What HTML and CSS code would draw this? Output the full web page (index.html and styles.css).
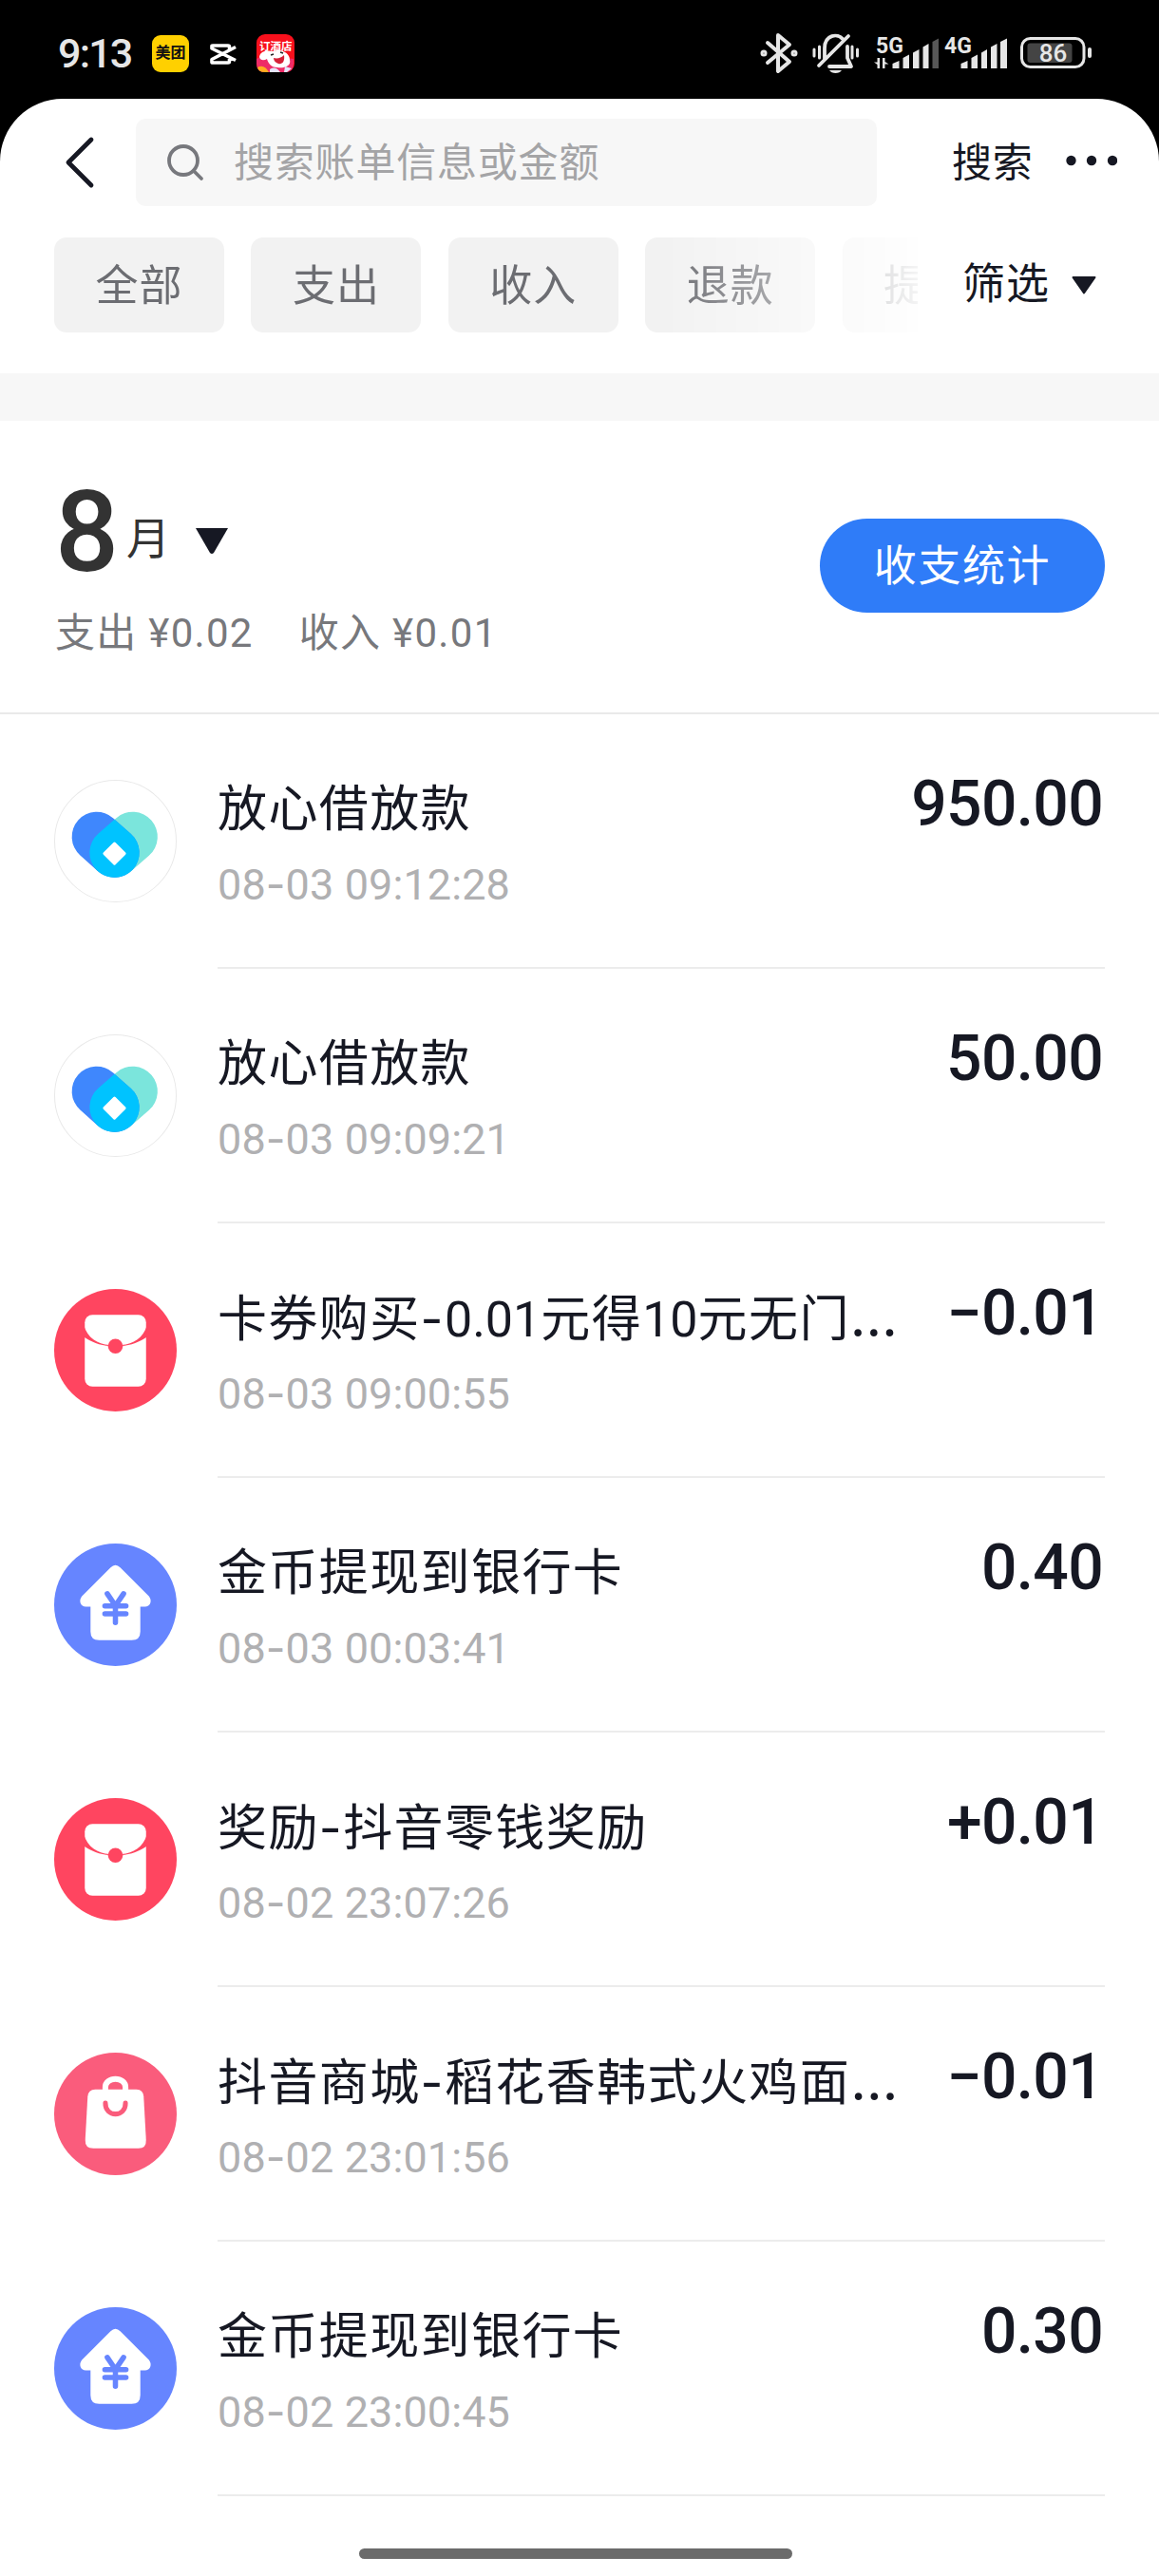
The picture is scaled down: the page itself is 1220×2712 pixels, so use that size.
FILE: index.html
```html
<!DOCTYPE html>
<html lang="zh-CN">
<head>
  <meta charset="UTF-8">
  <title>账单</title>
  <link rel="stylesheet" href="styles.css">
</head>
<body>
  <!-- shared icons for the bill list -->
  <svg class="defs" width="0" height="0">
    <symbol id="icon-loan" viewBox="0 0 128 128">
      <circle cx="64" cy="64" r="63.5" fill="#fff" stroke="#e9e9e9"/>
      <path d="M82 59.5L63 76" stroke="#7be5dc" stroke-width="52" stroke-linecap="round"/>
      <path d="M44.5 59.5L63 76" stroke="#3f87fd" stroke-width="52" stroke-linecap="round"/>
      <path d="M63 41.5L80 56.4A26 26 0 1 1 46 56.4Z" fill="#00c3ff"/>
      <path d="M63 66.5L73.5 77L63 87.5L52.5 77Z" fill="#fff" stroke="#fff" stroke-width="3" stroke-linejoin="round"/>
    </symbol>
    <symbol id="icon-packet" viewBox="0 0 128 128">
      <circle cx="64" cy="64" r="64" fill="#ff4560"/>
      <rect x="32" y="27" width="64" height="75" rx="8" fill="#fff"/>
      <path d="M31 38C35 51 45 58 58 58.5V59.5C48 59 38 55 31 50ZM97 38C93 51 83 58 70 58.5V59.5C80 59 90 55 97 50Z" fill="#ff4560"/>
      <circle cx="64" cy="59.7" r="7.7" fill="#ff4560"/>
    </symbol>
    <symbol id="icon-withdraw" viewBox="0 0 128 128">
      <circle cx="64" cy="64" r="64" fill="#6685ff"/>
      <path d="M59 25Q64 20 69 25L99 55C103 60 100 66 95 66H90V92Q90 101 81 101H47Q38 101 38 92V66H33C28 66 25 60 29 55Z" fill="#fff"/>
      <path d="M55.5 52.5L64 65L72.5 52.5M53 65.2H75M53 73.5H75M64 65V82.5" fill="none" stroke="#6685ff" stroke-width="5.5" stroke-linecap="round" stroke-linejoin="round"/>
    </symbol>
    <symbol id="icon-bag" viewBox="0 0 128 128">
      <circle cx="64" cy="64" r="64" fill="#fa5c7c"/>
      <path d="M53.5 41V36A10.5 8.5 0 0 1 74.5 36V41" fill="none" stroke="#fff" stroke-width="6"/>
      <path d="M43 38.5H86Q93 38.5 93.5 46L96 91Q96.5 100 88 100H41Q32 100 32.5 91L35 46Q35.5 38.5 43 38.5Z" fill="#fff"/>
      <path d="M53.5 52.5C53 68 75 68 74.5 52.5" fill="none" stroke="#fa5c7c" stroke-width="5" stroke-linecap="round"/>
    </symbol>
  </svg>

  <div class="status-bar">
    <span class="clock">9:13</span>
    <span class="app meituan">美团</span>
    <svg class="capcut" width="28" height="24" viewBox="0 0 28 24" fill="none" stroke="#fff" stroke-width="3.6" stroke-linejoin="round">
      <path d="M27 4.5L2 17.5V20.5Q2 21 3 21H19Q20.5 21 20.5 19.5V17M27 18.5L2 6V3.5Q2 3 3 3H19Q20.5 3 20.5 4.5V7"/>
    </svg>
    <svg class="promo" width="40" height="40" viewBox="0 0 40 40">
      <rect width="40" height="40" rx="9" fill="#f8101c"/>
      <path d="M0 26L8 22L39 26V31Q39 40 30 40H9Q0 40 0 31Z" fill="#ee2c67"/>
      <path d="M3 24C4 17 12 17 18 18C26 15 35 20 35 27C37 34 28 36 22 35C15 35 12 30 11 26C8 28 4 28 3 24Z" fill="#fff"/>
      <path d="M18 25C22 26 26 25 29 22C30 29 27 32 23 31C20 30 18 28 18 25Z" fill="#d51f36"/>
      <path d="M15 22l3-1M25 19l3 1" stroke="#222" stroke-width="1.5"/>
      <path d="M1 35Q8 31 13 40H9Q2 40 1 35Z" fill="#ffad1f"/>
      <path d="M14 37Q20 33 25 40H14ZM30 34L37 36L32 40H29Z" fill="#e5e4fa"/>
      <text x="3" y="17" class="promo-text">订酒店</text>
    </svg>

    <div class="status-right">
      <svg width="40" height="44" viewBox="0 0 40 44" fill="none" stroke="#e6e6e6" stroke-width="4" stroke-linejoin="round" stroke-linecap="round">
        <path d="M8 11L31 31L19 41V3L31 13L8 32"/>
        <circle cx="4" cy="22" r="1.5"/><circle cx="36" cy="22" r="1.5"/>
      </svg>
      <svg class="bell" width="50" height="44" viewBox="0 0 50 44" fill="none" stroke="#e6e6e6" stroke-width="3.8" stroke-linecap="round" stroke-linejoin="round">
        <path d="M13 28V17C13 2 27 1 32 7M37 15V27L41 36H18M38 4L7 35"/>
        <path d="M2 18V25M7.5 15V27M42 15V27M47.5 18V25" stroke-width="3"/>
        <path d="M18 40H31Q29 43 24.5 43Q20 43 18 40Z" fill="#e6e6e6" stroke="none"/>
      </svg>
      <svg class="signal" width="70" height="40" viewBox="0 -4 70 40" fill="#e6e6e6">
        <text x="3" y="18" class="net">5G</text>
        <path d="M7 23V34H4.500V30L1 27.5H4.500V23ZM10 34V23H12.500V27L16.500 29.5H12.500V34Z"/>
        <path d="M20.5 34V29L27.5 26V34ZM31.5 34V23L38 19.5V34ZM42 34V17.5L48.5 14V34ZM52.5 34V11.5L58.5 8V34Z"/>
        <path d="M62.5 34V6L69 2.5V34Z" fill="#575757"/>
      </svg>
      <svg class="signal second" width="68" height="40" viewBox="0 -4 68 40" fill="#e6e6e6">
        <text x="0" y="18" class="net">4G</text>
        <path d="M17.5 34V29L24.5 26V34ZM28.5 34V23L35 19.5V34ZM39 34V17.5L45 14V34ZM49 34V11.5L55.5 8V34ZM59 34V6L66 2.5V34Z"/>
      </svg>
      <svg class="battery" width="76" height="34" viewBox="0 0 76 34">
        <rect x="1.5" y="1.5" width="65.5" height="30" rx="9" fill="none" stroke="#e6e6e6" stroke-width="3"/>
        <rect x="7.5" y="6.5" width="47" height="20.5" rx="3" fill="#444"/>
        <rect x="71" y="11" width="4" height="11" rx="2" fill="#e6e6e6"/>
        <text x="34.5" y="26" text-anchor="middle" class="level">86</text>
      </svg>
    </div>
  </div>

  <div class="screen">
    <div class="header">
      <svg class="back" width="32" height="56" viewBox="0 0 32 56" fill="none" stroke="#161823" stroke-width="4.8" stroke-linecap="round" stroke-linejoin="round">
        <path d="M28 4L4 28L28 52"/>
      </svg>
      <div class="search-box">
        <svg width="40" height="40" viewBox="0 0 40 40" fill="none" stroke="#77787d" stroke-width="3.8" stroke-linecap="round">
          <circle cx="18" cy="18" r="15"/>
          <path d="M29 29L37 37"/>
        </svg>
        <span class="placeholder">搜索账单信息或金额</span>
      </div>
      <span class="search-btn">搜索</span>
      <svg class="more" width="54" height="12" viewBox="0 0 54 12" fill="#161823">
        <circle cx="5.5" cy="6" r="5.2"/><circle cx="27" cy="6" r="5.2"/><circle cx="49" cy="6" r="5.2"/>
      </svg>
    </div>

    <div class="filters">
      <div class="chips">
        <span class="chip">全部</span>
        <span class="chip">支出</span>
        <span class="chip">收入</span>
        <span class="chip">退款</span>
        <span class="chip">提现</span>
      </div>
      <div class="filter-btn">
        <span>筛选</span>
        <svg width="26" height="19" viewBox="0 0 26 19"><path d="M1.500 1H24.500L13 17.500Z" fill="#161823" stroke="#161823" stroke-width="2" stroke-linejoin="round"/></svg>
      </div>
    </div>

    <div class="band"></div>

    <div class="summary">
      <div class="summary-info">
        <div class="month">
          <span class="month-num">8</span>
          <span class="month-unit">月</span>
          <svg width="34" height="28" viewBox="0 0 34 28"><path d="M0 0H34L19 26Q17 28 15 26Z" fill="#161823"/></svg>
        </div>
        <div class="totals">
          <span>支出 ¥0.02</span>
          <span>收入 ¥0.01</span>
        </div>
      </div>
      <button class="stats-btn">收支统计</button>
    </div>

    <div class="list">
      <div class="row">
        <svg class="row-icon"><use href="#icon-loan"/></svg>
        <div class="row-body">
          <div class="row-text">
            <div class="title">放心借放款</div>
            <div class="date">08<span class="dash">-</span>03 09:12:28</div>
          </div>
          <div class="amount">950.00</div>
        </div>
      </div>
      <div class="row">
        <svg class="row-icon"><use href="#icon-loan"/></svg>
        <div class="row-body">
          <div class="row-text">
            <div class="title">放心借放款</div>
            <div class="date">08<span class="dash">-</span>03 09:09:21</div>
          </div>
          <div class="amount">50.00</div>
        </div>
      </div>
      <div class="row">
        <svg class="row-icon"><use href="#icon-packet"/></svg>
        <div class="row-body">
          <div class="row-text">
            <div class="title">卡券购买<span class="dash">-</span><span class="num">0.01</span>元得<span class="num">10</span>元无门<span class="dots">…</span></div>
            <div class="date">08<span class="dash">-</span>03 09:00:55</div>
          </div>
          <div class="amount">−0.01</div>
        </div>
      </div>
      <div class="row">
        <svg class="row-icon"><use href="#icon-withdraw"/></svg>
        <div class="row-body">
          <div class="row-text">
            <div class="title">金币提现到银行卡</div>
            <div class="date">08<span class="dash">-</span>03 00:03:41</div>
          </div>
          <div class="amount">0.40</div>
        </div>
      </div>
      <div class="row">
        <svg class="row-icon"><use href="#icon-packet"/></svg>
        <div class="row-body">
          <div class="row-text">
            <div class="title">奖励<span class="dash">-</span>抖音零钱奖励</div>
            <div class="date">08<span class="dash">-</span>02 23:07:26</div>
          </div>
          <div class="amount">+0.01</div>
        </div>
      </div>
      <div class="row">
        <svg class="row-icon"><use href="#icon-bag"/></svg>
        <div class="row-body">
          <div class="row-text">
            <div class="title">抖音商城<span class="dash">-</span>稻花香韩式火鸡面<span class="dots">…</span></div>
            <div class="date">08<span class="dash">-</span>02 23:01:56</div>
          </div>
          <div class="amount">−0.01</div>
        </div>
      </div>
      <div class="row">
        <svg class="row-icon"><use href="#icon-withdraw"/></svg>
        <div class="row-body">
          <div class="row-text">
            <div class="title">金币提现到银行卡</div>
            <div class="date">08<span class="dash">-</span>02 23:00:45</div>
          </div>
          <div class="amount">0.30</div>
        </div>
      </div>
    </div>

    <div class="home-bar"></div>
  </div>
</body>
</html>
```
FILE: styles.css
```css
* {
  box-sizing: border-box;
}
body {
  margin: 0;
  width: 1220px;
  height: 2712px;
  overflow: hidden;
  background: #000;
  color: #161823;
  font-family: Roboto, "Noto Sans CJK SC", sans-serif;
}
svg {
  display: block;
  flex: none;
}
.defs {
  position: absolute;
}

/* Status bar */
.status-bar {
  display: flex;
  align-items: flex-start;
  height: 104px;
  padding-left: 61px;
}
.clock {
  width: 99px;
  padding-top: 30px;
  font-size: 43px;
  line-height: 52px;
  letter-spacing: -1.8px;
  font-weight: 500;
  color: #e6e6e6;
}
.app {
  width: 39px;
  height: 39px;
  margin-top: 37px;
  border-radius: 9px;
  text-align: center;
}
.meituan {
  background: #ffd000;
  color: #111;
  font-size: 16px;
  line-height: 38px;
  font-weight: 700;
}
.capcut {
  margin: 45px 0 0 22px;
}
.promo {
  margin: 36px 0 0 21px;
}
.promo-text {
  font-size: 11.5px;
  font-weight: 700;
  fill: #fff;
}
.status-right {
  display: flex;
  align-items: flex-start;
  margin-left: auto;
  padding: 34px 70px 0 0;
}
.bell {
  margin-left: 15px;
}
.signal {
  margin-left: 14px;
}
.signal.second {
  margin-left: 5px;
}
.net {
  font-size: 23px;
  font-weight: 700;
}
.battery {
  margin: 5px 0 0 12px;
}
.level {
  font-size: 26px;
  font-weight: 500;
  fill: #e6e6e6;
}

.screen {
  height: 2608px;
  background: #fff;
  border-radius: 66px 66px 0 0;
}

/* Search header */
.header {
  display: flex;
  align-items: center;
  height: 134px;
  padding: 0 44px 0 68px;
}
.search-box {
  display: flex;
  align-items: center;
  gap: 31px;
  width: 780px;
  height: 92px;
  margin-left: 43px;
  padding-left: 32px;
  border-radius: 10px;
  background: #f7f7f7;
  color: #a4a4a6;
  font-size: 42px;
  letter-spacing: 0.8px;
}
.placeholder {
  padding-bottom: 8px;
}
.search-btn {
  margin-left: 79px;
  padding-bottom: 8px;
  font-size: 42px;
  letter-spacing: 0.8px;
}
.more {
  margin: -4px 0 0 auto;
}

/* Filters */
.filters {
  display: flex;
  align-items: flex-start;
  height: 155px;
  padding: 12px 0 0 57px;
}
.chips {
  display: flex;
  gap: 28.4px;
  width: 909px;
  overflow: hidden;
  -webkit-mask-image: linear-gradient(to right, #000 640px, rgba(0, 0, 0, 0.08) 909px);
  mask-image: linear-gradient(to right, #000 640px, rgba(0, 0, 0, 0.08) 909px);
}
.chip {
  flex: none;
  width: 179px;
  height: 100px;
  border-radius: 13px;
  background: #f2f2f2;
  color: #6c6d72;
  font-size: 45px;
  line-height: 104px;
  letter-spacing: 1px;
  text-align: center;
}
.filter-btn {
  display: flex;
  align-items: center;
  gap: 23px;
  height: 91px;
  margin-left: 47px;
  font-size: 45px;
  letter-spacing: 1px;
}
.filter-btn svg {
  margin-top: 10px;
}
.band {
  height: 50px;
  background: #f7f7f7;
}

/* Month summary */
.summary {
  display: flex;
  justify-content: space-between;
  align-items: flex-start;
  height: 309px;
  padding: 0 57px 0 58px;
  border-bottom: 2px solid #e9e9e9;
}
.month {
  display: flex;
  align-items: flex-start;
  height: 192px;
  padding-top: 48px;
  color: #333;
}
.month-num {
  width: 75px;
  font-size: 118px;
  line-height: 140px;
  font-weight: 500;
}
.month-unit {
  width: 73px;
  padding-top: 42px;
  font-size: 46px;
  line-height: 68px;
}
.month svg {
  margin-top: 65px;
}
.totals {
  display: flex;
  gap: 48px;
  font-size: 42px;
  line-height: 64px;
  letter-spacing: 1.3px;
  color: #77787c;
}
.stats-btn {
  width: 300px;
  height: 99px;
  margin-top: 103px;
  padding: 0 0 6px;
  border: none;
  border-radius: 50px;
  background: #2f7cf8;
  color: #fff;
  font-family: inherit;
  font-size: 45px;
  letter-spacing: 1.6px;
}

/* Bill list */
.row {
  display: flex;
  height: 268px;
  padding: 0 57px;
}
.row-icon {
  width: 129px;
  height: 129px;
  margin: 69px 43px 0 0;
}
.row-body {
  display: flex;
  justify-content: space-between;
  flex: 1;
  border-bottom: 2px solid #ececec;
}
.row-text {
  padding-top: 66px;
}
.title {
  height: 70px;
  font-size: 52px;
  line-height: 70px;
  letter-spacing: 1.4px;
  white-space: nowrap;
}
.num {
  letter-spacing: 0;
}
.dash {
  font-family: Inter, sans-serif;
}
.dots {
  font-family: Inter, sans-serif;
  font-size: 58px;
  line-height: 1;
}
.date {
  margin-top: 8px;
  font-size: 45px;
  line-height: 70px;
  letter-spacing: 0.1px;
  color: #b0b0b2;
}
.amount {
  padding: 60px 2px 0 0;
  font-size: 66px;
  line-height: 70px;
  font-weight: 500;
  letter-spacing: -0.7px;
}

.home-bar {
  width: 456px;
  height: 11px;
  margin: 55px 0 0 378px;
  border-radius: 6px;
  background: #6b6b6b;
}
```
